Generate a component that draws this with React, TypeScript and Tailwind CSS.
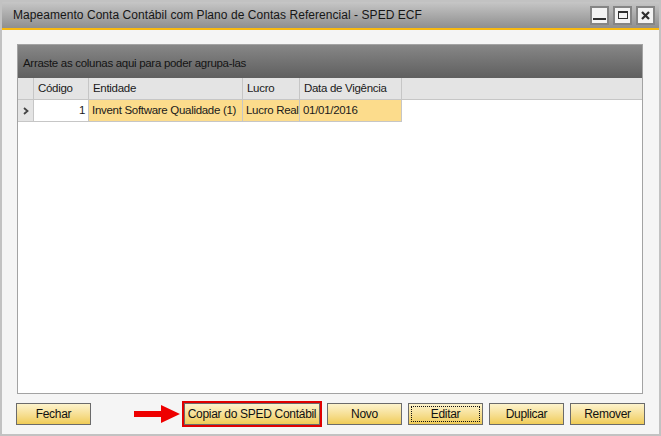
import React from "react";

function Btn({ label, w = "w-[75px]", focus = false }: { label: string; w?: string; focus?: boolean }) {
  return (
    <div
      className={`${w} shrink-0 h-[22px] border border-[#6b6b6b] bg-gradient-to-b from-[#fdf3cc] to-[#f0cc55] flex items-center justify-center p-[2px]`}
    >
      <div
        className={`w-full h-full flex items-center justify-center whitespace-nowrap text-[12px] tracking-[-0.3px] leading-none text-[#111] ${
          focus ? "border border-dotted border-[#111]" : ""
        }`}
      >
        {label}
      </div>
    </div>
  );
}

export default function App() {
  const font = { fontFamily: '"Liberation Sans", Arial, sans-serif' };
  return (
    <div
      className="w-[661px] h-[436px] border-2 border-[#c2c2c2] bg-[#f5f5f5] flex flex-col overflow-hidden"
      style={font}
    >
      {/* Title bar */}
      <div className="h-[26px] shrink-0 bg-gradient-to-b from-[#c6c6c6] to-[#8f8f8f] flex items-center pl-[11px] pr-[4px]">
        <div className="flex-1 text-[12px] text-[#161616] tracking-[0.05px] whitespace-nowrap">
          Mapeamento Conta Contábil com Plano de Contas Referencial - SPED ECF
        </div>
        <div className="flex gap-[4px] items-center">
          <div className="w-[19px] h-[19px] border-2 border-[#858585] bg-[#f3f3f3] flex items-end justify-center pb-[3px]">
            <div className="w-[13px] h-[2px] bg-[#2e2e2e]" />
          </div>
          <div className="w-[19px] h-[19px] border-2 border-[#858585] bg-[#f3f3f3] flex items-center justify-center">
            <div className="w-[10px] h-[8px] border border-t-2 border-[#2e2e2e]" />
          </div>
          <div className="w-[19px] h-[19px] border-2 border-[#858585] bg-[#f3f3f3] flex items-center justify-center">
            <svg width="9" height="9" viewBox="0 0 9 9">
              <path d="M1 1 L8 8 M8 1 L1 8" stroke="#2e2e2e" strokeWidth="2.2" />
            </svg>
          </div>
        </div>
      </div>
      <div className="h-[2px] shrink-0 bg-[#f7b911]" />

      {/* Body */}
      <div className="flex-1 flex flex-col pl-[15px] pr-[16px] pt-[14px]">
        {/* Grid */}
        <div className="h-[350px] border border-[#a3a3a3] bg-white flex flex-col text-[11.5px] tracking-[-0.3px]">
          <div className="h-[33px] shrink-0 bg-gradient-to-b from-[#878787] to-[#5f5f5f] flex items-center pl-[5px] pt-[4px] text-[#141414]">
            Arraste as colunas aqui para poder agrupa-las
          </div>
          {/* Header */}
          <div className="h-[22px] shrink-0 flex bg-[#e4e4e4] border-b border-[#c6c6c6] text-[#1a1a1a]">
            <div className="w-[16px] border-r border-[#c6c6c6]" />
            <div className="w-[55px] border-r border-[#c6c6c6] flex items-center pl-[4px]">Código</div>
            <div className="w-[154px] border-r border-[#c6c6c6] flex items-center pl-[4px]">Entidade</div>
            <div className="w-[57px] border-r border-[#c6c6c6] flex items-center pl-[4px]">Lucro</div>
            <div className="w-[102px] border-r border-[#c6c6c6] flex items-center pl-[4px]">Data de Vigência</div>
            <div className="flex-1" />
          </div>
          {/* Row */}
          <div className="h-[22px] shrink-0 flex text-[#1a1a1a]">
            <div className="w-[16px] bg-[#e4e4e4] border-r border-b border-[#c6c6c6] flex items-center justify-center">
              <svg width="6" height="8" viewBox="0 0 6 8">
                <path d="M1 1 L4.5 4 L1 7" fill="none" stroke="#444" strokeWidth="1.8" />
              </svg>
            </div>
            <div className="w-[55px] bg-white border-r border-b border-[#c6c6c6] flex items-center justify-end pr-[3px]">1</div>
            <div className="w-[154px] bg-[#fcdc8c] border-r border-b border-[#c6c6c6] flex items-center pl-[3px] whitespace-nowrap">
              Invent Software Qualidade (1)
            </div>
            <div className="w-[57px] bg-[#fcdc8c] border-r border-b border-[#c6c6c6] flex items-center pl-[3px] whitespace-nowrap overflow-hidden">
              Lucro Real
            </div>
            <div className="w-[102px] bg-[#fcdc8c] border-r border-b border-[#c6c6c6] flex items-center pl-[3px]">
              01/01/2016
            </div>
            <div className="flex-1" />
          </div>
          <div className="flex-1" />
        </div>

        {/* Buttons */}
        <div className="mt-[7px] flex items-center justify-between -ml-[1px] -mr-[2px]">
          <Btn label="Fechar" />
          <div className="flex items-center">
            <svg width="47" height="20" viewBox="0 0 47 20" className="shrink-0">
              <path d="M0 7 H27 V1 L46 10 L27 19 V13 H0 Z" fill="#ee0000" />
            </svg>
            <div className="shrink-0 border-2 border-[#e00000] ml-[1px]">
              <Btn label="Copiar do SPED Contábil" w="w-[136px]" />
            </div>
            <div className="ml-[5px] flex gap-[6px]">
              <Btn label="Novo" />
              <Btn label="Editar" focus />
              <Btn label="Duplicar" />
              <Btn label="Remover" />
            </div>
          </div>
        </div>
      </div>
    </div>
  );
}
